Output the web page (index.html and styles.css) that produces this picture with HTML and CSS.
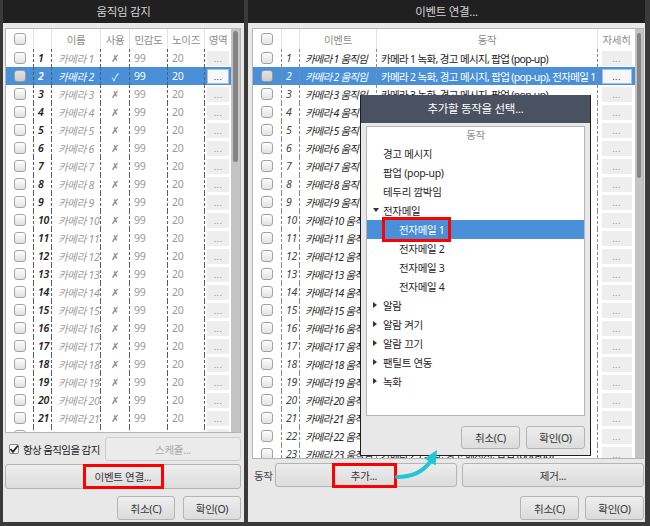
FILE: index.html
```html
<!DOCTYPE html>
<html lang="ko">
<head>
  <meta charset="UTF-8" />
  <meta name="viewport" content="width=device-width, initial-scale=1.0" />
  <title>움직임 감지 / 이벤트 연결</title>
  <link rel="stylesheet" href="styles.css">
</head>
<body>

  <div class="screen">

    <div class="window motion">
      <div class="titlebar">움직임 감지</div>
      <div class="win-body">
        <div class="grid-box">
          <div class="grid">
            <div class="row head">
              <span class="cell c"><i class="chk"></i></span>
              <span class="cell"></span>
              <span class="cell">이름</span>
              <span class="cell">사용</span>
              <span class="cell">민감도</span>
              <span class="cell">노이즈</span>
              <span class="cell">영역</span>
            </div>
            <div id="motionRows"></div>
          </div>
          <div class="scrollbar"><div class="thumb"></div></div>
        </div>

        <div class="opt-row">
          <label class="check-label"><i class="chk small checked">
            <svg viewBox="0 0 10 10" width="10" height="10"><path d="M1.5 5.2 L4 7.8 L8.8 1.8" fill="none" stroke="#222" stroke-width="1.8"/></svg>
          </i>항상 움직임을 감지</label>
          <button class="btn" disabled>스케쥴...</button>
        </div>

        <button class="btn wide"><span class="mark">이벤트 연결...</span></button>

        <div class="dlg-buttons">
          <button class="btn">취소(C)</button>
          <button class="btn">확인(O)</button>
        </div>
      </div>
    </div>

    <div class="window events">
      <div class="titlebar">이벤트 연결...</div>
      <div class="win-body">
        <div class="grid-box">
          <div class="grid">
            <div class="row head">
              <span class="cell c"><i class="chk"></i></span>
              <span class="cell"></span>
              <span class="cell">이벤트</span>
              <span class="cell">동작</span>
              <span class="cell">자세히</span>
            </div>
            <div id="eventRows"></div>
          </div>
          <div class="scrollbar"><div class="thumb"></div></div>
        </div>

        <div class="action-row">
          <span class="action-label">동작</span>
          <button class="btn"><span class="mark">추가...</span></button>
          <button class="btn">제거...</button>
        </div>

        <div class="dlg-buttons">
          <button class="btn">취소(C)</button>
          <button class="btn">확인(O)</button>
        </div>
      </div>
    </div>

    <!-- dialog opened from the 추가... button -->
    <div class="picker">
      <div class="picker-title">추가할 동작을 선택...</div>
      <div class="picker-body">
        <div class="tree">
          <div class="tree-head">동작</div>
          <div class="tree-item"><i class="arrow"></i>경고 메시지</div>
          <div class="tree-item"><i class="arrow"></i>팝업 (pop-up)</div>
          <div class="tree-item"><i class="arrow"></i>테두리 깜박임</div>
          <div class="tree-item"><i class="arrow down"></i>전자메일</div>
          <div class="tree-item child selected">전자메일 1<span class="mark"></span></div>
          <div class="tree-item child">전자메일 2</div>
          <div class="tree-item child">전자메일 3</div>
          <div class="tree-item child">전자메일 4</div>
          <div class="tree-item"><i class="arrow right"></i>알람</div>
          <div class="tree-item"><i class="arrow right"></i>알람 켜기</div>
          <div class="tree-item"><i class="arrow right"></i>알람 끄기</div>
          <div class="tree-item"><i class="arrow right"></i>팬틸트 연동</div>
          <div class="tree-item"><i class="arrow right"></i>녹화</div>
        </div>
        <div class="dlg-buttons">
          <button class="btn">취소(C)</button>
          <button class="btn">확인(O)</button>
        </div>
      </div>
    </div>

    <svg class="pointer" viewBox="0 0 50 40" width="50" height="40">
      <path d="M7 33 C 20 33, 32 29, 40 18" fill="none" stroke="#1fc6d6" stroke-width="4" stroke-linecap="round"/>
      <polygon points="47,6 45.5,21.5 34.5,14.5" fill="#1fc6d6"/>
    </svg>

  </div>

  <script>
    const motionRows = document.getElementById('motionRows');
    const eventRows = document.getElementById('eventRows');

    for (let i = 1; i <= 22; i++) {
      const sel = i === 2;
      motionRows.insertAdjacentHTML('beforeend', `
        <div class="row${sel ? ' selected' : ''}">
          <span class="cell c"><i class="chk"></i></span>
          <span class="cell num">${i}</span>
          <span class="cell name">카메라 ${i}</span>
          <span class="cell c use">${sel ? '✓' : '✗'}</span>
          <span class="cell val">99</span>
          <span class="cell val">20</span>
          <span class="cell c"><i class="dots">...</i></span>
        </div>`);
    }

    for (let i = 1; i <= 23; i++) {
      const sel = i === 2;
      const action = `카메라 ${i} 녹화, 경고 메시지, 팝업 (pop-up)` + (sel ? ', 전자메일 1' : '');
      eventRows.insertAdjacentHTML('beforeend', `
        <div class="row${sel ? ' selected' : ''}">
          <span class="cell c"><i class="chk"></i></span>
          <span class="cell num">${i}</span>
          <span class="cell name">카메라 ${i} 움직임</span>
          <span class="cell text">${action}</span>
          <span class="cell c"><i class="dots">...</i></span>
        </div>`);
    }
  </script>

</body>
</html>
```

FILE: styles.css
```css
* {
  box-sizing: border-box;
}

body {
  margin: 0;
  background: #3a3a3a;
  font-family: "Noto Sans", "Noto Sans CJK KR", sans-serif;
  font-size: 10.5px;
  letter-spacing: -0.3px;
  color: #2b2b2b;
}

.screen {
  position: relative;
  display: flex;
  gap: 4px;
  width: 650px;
  height: 526px;
  padding-left: 3px;
  overflow: hidden;
}

.window {
  display: flex;
  flex-direction: column;
  height: 522px;
  background: #e8e8e8;
}

.motion {
  width: 241px;
}

.events {
  width: 397px;
}

.titlebar {
  flex: none;
  height: 23px;
  background: #202020;
  color: #d6d6d6;
  font-size: 11.5px;
  line-height: 23px;
  text-align: center;
}

.win-body {
  flex: 1;
  display: flex;
  flex-direction: column;
  padding: 5px 3px 2px 2px;
}

.events .win-body {
  padding: 5px 1px 2px 4px;
}

/* tables */

.grid-box {
  display: flex;
  flex: none;
  background: #fff;
  border: 1px solid #b5b5b5;
  overflow: hidden;
}

.motion .grid-box {
  height: 405px;
}

.events .grid-box {
  height: 431px;
}

.grid {
  flex: 1;
  overflow: hidden;
}

.row {
  display: grid;
  height: 18px;
}

.motion .row {
  grid-template-columns: 27px 18px 49px 29px 38px 37px 27px;
}

.events .row {
  grid-template-columns: 28px 18px 77px 221px 38px;
}

.row.head {
  height: 20px;
  color: #8c8c8c;
}

.cell {
  display: flex;
  align-items: center;
  padding-left: 4px;
  white-space: nowrap;
  overflow: hidden;
}

.cell + .cell {
  border-left: 1px dashed #5c5c5c;
}

.events .cell + .cell {
  border-left-color: #8a8a8a;
}

.head .cell {
  justify-content: center;
  padding: 0;
}

.head .cell + .cell {
  border-left: 1px solid #e3e3e3;
}

.cell.c {
  justify-content: center;
  padding: 0;
}

.num {
  font-style: italic;
  font-weight: 600;
  color: #222;
}

.events .num {
  font-weight: 400;
  color: #444;
}

.name {
  padding-left: 6px;
  font-style: italic;
  color: #9a9a9a;
}

.events .name {
  padding-left: 5px;
  letter-spacing: -0.8px;
  color: #262626;
}

.use {
  color: #8a8a8a;
  font-size: 10px;
}

.val {
  color: #9a9a9a;
}

.text {
  padding-left: 4px;
  letter-spacing: -0.65px;
  color: #222;
}

.chk {
  display: block;
  width: 12px;
  height: 12px;
  border: 1px solid #a3a3a3;
  border-radius: 3px;
  background: linear-gradient(#fdfdfd, #e2e2e2);
}

.dots {
  display: flex;
  justify-content: center;
  width: 22px;
  height: 15px;
  background: #eeeeee;
  color: #8e8e8e;
  font-style: normal;
  font-size: 9px;
  line-height: 15px;
  letter-spacing: 0.5px;
}

.events .dots {
  width: 30px;
}

.selected {
  background: #4a90d9;
}

.selected .cell {
  color: #fff;
}

.selected .chk {
  background: linear-gradient(#e2e2e2, #cdcdcd);
  border-color: #9a9a9a;
}

.selected .dots {
  background: #f7f7f7;
  border: 1px solid #9cc0ea;
  color: #333;
  line-height: 13px;
}

.scrollbar {
  flex: none;
  width: 9px;
  padding: 2px 2px;
  background: #c3c3c3;
}

.thumb {
  height: 131px;
  border-radius: 3px;
  background: #848484;
}

.events .scrollbar {
  width: 8px;
  padding-top: 4px;
}

.events .thumb {
  height: 145px;
}

/* buttons */

.btn {
  display: flex;
  align-items: center;
  justify-content: center;
  padding: 0;
  font: inherit;
  letter-spacing: inherit;
  color: #333;
  background: linear-gradient(#ededed, #dcdcdc);
  border: 1px solid #b4b4b4;
  border-radius: 3px;
}

.btn:disabled {
  color: #a9a9a9;
  background: #ebebeb;
  border-color: #cecece;
}

.mark {
  display: flex;
  align-items: center;
  justify-content: center;
  border: 3px solid #ff0000;
}

.opt-row {
  display: flex;
  align-items: center;
  gap: 5px;
  height: 24px;
  margin-top: 4px;
}

.check-label {
  display: flex;
  align-items: center;
  gap: 4px;
  padding-left: 4px;
  white-space: nowrap;
  letter-spacing: -0.6px;
  color: #222;
}

.chk.small {
  width: 10px;
  height: 10px;
  border-radius: 2px;
  background: #fafafa;
  border-color: #888;
}

.chk.small svg {
  display: block;
  margin: -1px 0 0 -1px;
}

.opt-row .btn {
  flex: 1;
  height: 24px;
}

.btn.wide {
  height: 25px;
  margin-top: 3px;
}

.btn.wide .mark {
  width: 81px;
  height: 25px;
}

.dlg-buttons {
  display: flex;
  justify-content: flex-end;
  gap: 8px;
  margin-top: 7px;
}

.dlg-buttons .btn {
  width: 58px;
  height: 24px;
}

.events .dlg-buttons {
  gap: 6px;
  margin-top: 9px;
}

.events .dlg-buttons .btn {
  width: 59px;
}

.action-row {
  display: flex;
  align-items: center;
  gap: 5px;
  height: 24px;
  margin-top: 4px;
}

.action-label {
  width: 18px;
  padding-left: 2px;
  color: #444;
  white-space: nowrap;
}

.action-row .btn {
  flex: 1;
  height: 24px;
}

.action-row .mark {
  width: 65px;
  height: 25px;
  margin-left: -4px;
}

/* action picker dialog */

.picker {
  position: absolute;
  left: 360px;
  top: 95px;
  display: flex;
  flex-direction: column;
  width: 231px;
  height: 361px;
  background: #e8e8e8;
  border: 1px solid #1e1e1e;
  border-top: none;
}

.picker-title {
  flex: none;
  height: 28px;
  background: #4a5262;
  color: #fff;
  font-size: 11.5px;
  line-height: 28px;
  text-align: center;
}

.picker-body {
  display: flex;
  flex-direction: column;
  padding: 3px 5px 0 5px;
}

.tree {
  height: 290px;
  background: #fff;
  border: 1px solid #b5b5b5;
}

.tree-head {
  height: 17px;
  line-height: 17px;
  text-align: center;
  color: #8c8c8c;
}

.tree-item {
  position: relative;
  display: flex;
  align-items: center;
  height: 19px;
  padding-left: 5px;
  color: #262626;
  white-space: nowrap;
}

.tree-item.child {
  padding-left: 32px;
}

.tree-item.selected {
  background: #4a90d9;
  color: #fff;
}

.tree-item .mark {
  position: absolute;
  left: 15px;
  top: -3px;
  width: 69px;
  height: 25px;
}

.arrow {
  flex: none;
  width: 11px;
  height: 7px;
  position: relative;
}

.arrow.down::before,
.arrow.right::before {
  content: "";
  position: absolute;
  left: 1px;
  top: 0;
  border-style: solid;
  border-color: transparent;
}

.arrow.down::before {
  top: 1px;
  border-width: 4px 3px 0 3px;
  border-top-color: #333;
}

.arrow.right::before {
  border-width: 3.5px 0 3.5px 4px;
  border-left-color: #333;
}

.picker .dlg-buttons {
  gap: 6px;
  margin-top: 10px;
}

.picker .dlg-buttons .btn {
  width: 59px;
  height: 23px;
}

.pointer {
  position: absolute;
  left: 390px;
  top: 444px;
}
```
